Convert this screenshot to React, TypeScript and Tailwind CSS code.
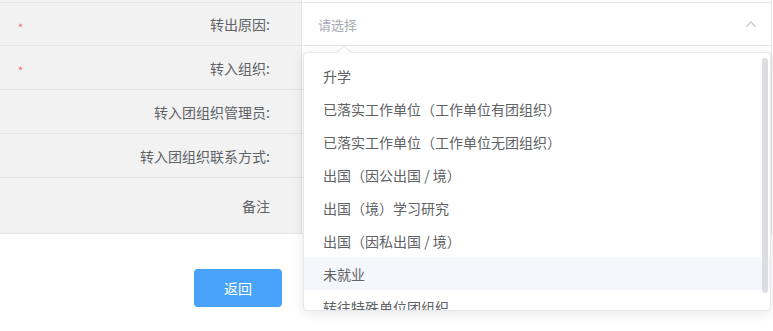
import React from "react";

const rows = [
  { label: "转出原因:", required: true, h: "h-[43px]" },
  { label: "转入组织:", required: true, h: "h-[44px]" },
  { label: "转入团组织管理员:", required: false, h: "h-[44px]" },
  { label: "转入团组织联系方式:", required: false, h: "h-[44px]" },
  { label: "备注", required: false, h: "h-[56px]" },
];

const options = [
  "升学",
  "已落实工作单位（工作单位有团组织）",
  "已落实工作单位（工作单位无团组织）",
  "出国（因公出国 / 境）",
  "出国（境）学习研究",
  "出国（因私出国 / 境）",
  "未就业",
  "转往特殊单位团组织",
];

function ChevronUp() {
  return (
    <svg width="12" height="8" viewBox="0 0 12 8" fill="none">
      <path d="M1.5 6.5 L6 2 L10.5 6.5" stroke="#c0c4cc" strokeWidth="1.2" />
    </svg>
  );
}

export default function App() {
  return (
    <div
      className="relative w-[773px] h-[331px] overflow-hidden bg-white text-[14px] text-[#606266]"
      style={{ fontFamily: '"Noto Sans CJK SC", "Noto Sans", sans-serif' }}
    >
      {/* Table */}
      <div className="w-[772px] border-r border-[#e4e4e4]">
        {/* clipped row above */}
        <div className="grid grid-cols-[302px_1fr] h-[3px] border-b border-[#e4e4e4]">
          <div className="bg-[#f2f2f2] border-r border-[#e4e4e4]" />
          <div />
        </div>
        {rows.map((r, i) => (
          <div
            key={i}
            className={`grid grid-cols-[302px_1fr] border-b border-[#e4e4e4] ${r.h}`}
          >
            <div className="relative flex items-center justify-end bg-[#f2f2f2] border-r border-[#e4e4e4] pr-[31px] leading-none">
              {r.required && (
                <span className="absolute left-[18px] top-[19px] text-[11px] text-[#f56c6c] leading-none">*</span>
              )}
              <span>{r.label}</span>
            </div>
            <div className="flex items-center">
              {i === 0 && (
                <div className="flex w-full items-center justify-between pl-[16px] pr-[14px]">
                  <span className="text-[13px] text-[#a8abb2] leading-none">请选择</span>
                  <ChevronUp />
                </div>
              )}
            </div>
          </div>
        ))}
      </div>

      {/* Button */}
      <div className="pt-[35px] pl-[194px]">
        <button className="w-[88px] h-[38px] rounded-[4px] bg-[#4aa3fa] text-white text-[14px] leading-none">
          返回
        </button>
      </div>

      {/* Dropdown overlay */}
      <div className="absolute left-[303px] top-[52px] w-[468px] h-[259px] rounded-[4px] border border-[#e4e7ed] bg-white shadow-[0_2px_12px_rgba(0,0,0,0.1)]">
        <div className="absolute left-[35px] top-[-6px] w-[10px] h-[10px] rotate-45 bg-white border-l border-t border-[#e4e7ed]" />
        <div className="relative h-full overflow-hidden rounded-[4px] pt-[6px]">
          {options.map((o, i) => (
            <div
              key={i}
              className={`flex items-center h-[33px] pl-[19px] leading-none ${i === 6 ? "bg-[#f5f7fa]" : ""}`}
            >
              {o}
            </div>
          ))}
          <div className="absolute right-[2px] top-[5px] w-[6px] h-[235px] rounded-full bg-[#dcdde0]" />
        </div>
      </div>
    </div>
  );
}
